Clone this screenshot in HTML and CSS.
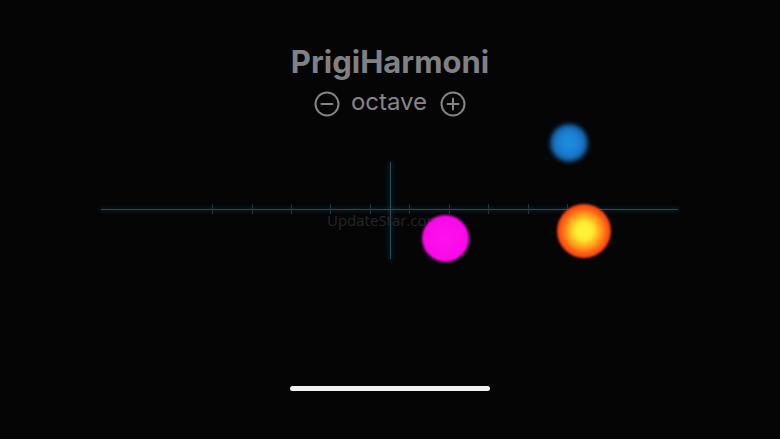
FILE: index.html
```html
<!DOCTYPE html>
<html>
<head>
<meta charset="utf-8">
<link rel="stylesheet" href="styles.css">
</head>
<body>
<div class="screen">
  <header class="header">
    <h1 class="title">PrigiHarmoni</h1>
    <div class="octave">
      <svg class="icon" viewBox="0 0 26 26" width="26" height="26"><circle cx="13" cy="13" r="11.5" fill="none" stroke="currentColor" stroke-width="2"/><line x1="7.5" y1="13" x2="18.5" y2="13" stroke="currentColor" stroke-width="2" stroke-linecap="round"/></svg>
      <span class="octave-label">octave</span>
      <svg class="icon" viewBox="0 0 26 26" width="26" height="26"><circle cx="13" cy="13" r="11.5" fill="none" stroke="currentColor" stroke-width="2"/><line x1="7.5" y1="13" x2="18.5" y2="13" stroke="currentColor" stroke-width="2" stroke-linecap="round"/><line x1="13" y1="7.5" x2="13" y2="18.5" stroke="currentColor" stroke-width="2" stroke-linecap="round"/></svg>
    </div>
  </header>

  <div class="stage">
    <div class="axis"></div>
    <div class="tick" style="left:212px"></div>
    <div class="tick" style="left:252px"></div>
    <div class="tick" style="left:291px"></div>
    <div class="tick" style="left:330px"></div>
    <div class="tick" style="left:370px"></div>
    <div class="tick" style="left:409px"></div>
    <div class="tick" style="left:449px"></div>
    <div class="tick" style="left:488px"></div>
    <div class="tick" style="left:528px"></div>
    <div class="tick" style="left:567px"></div>
    <div class="cursor"></div>
    <div class="watermark">UpdateStar.com</div>
    <div class="dot dot-blue"></div>
    <div class="dot dot-magenta"></div>
    <div class="dot dot-orange"></div>
  </div>

  <div class="home-bar"></div>
</div>
</body>
</html>
```

FILE: styles.css
```css
* { box-sizing: border-box; }
html, body {
  margin: 0;
  padding: 0;
  background: #050506;
}
.screen {
  position: relative;
  width: 780px;
  height: 439px;
  overflow: hidden;
  background: #050506;
  display: flex;
  flex-direction: column;
  align-items: center;
  font-family: Inter, "Open Sans", sans-serif;
}
.header {
  display: flex;
  flex-direction: column;
  align-items: center;
  padding-top: 44px;
  color: #7d7d7f;
  position: relative;
  z-index: 2;
}
.title {
  margin: 0;
  font-size: 31px;
  font-weight: 700;
  line-height: 36px;
  letter-spacing: 0;
  color: #818183;
}
.octave {
  display: flex;
  align-items: center;
  gap: 11px;
  margin-top: 8px;
  color: #858587;
}
.octave-label {
  font-size: 24px;
  line-height: 28px;
  color: #868688;
  padding-bottom: 3px;
  margin-right: 2px;
}
.icon { display: block; }

.stage {
  position: absolute;
  left: 0;
  top: 0;
  width: 780px;
  height: 439px;
}
.axis {
  position: absolute;
  left: 101px;
  top: 208.5px;
  width: 577px;
  height: 1px;
  background: #2a4a58;
  box-shadow: 0 0 4px 1px rgba(40, 110, 140, 0.3);
}
.tick {
  position: absolute;
  top: 204px;
  width: 1px;
  height: 10px;
  background: #26363e;
}
.cursor {
  position: absolute;
  left: 389.5px;
  top: 162px;
  width: 1px;
  height: 97px;
  background: #2a4c5b;
  box-shadow: 0 0 5px 1px rgba(40, 110, 140, 0.3);
}
.watermark {
  position: absolute;
  left: 327px;
  top: 210px;
  font-family: "Open Sans", sans-serif;
  font-size: 15px;
  color: #262628;
}
.dot {
  position: absolute;
  border-radius: 50%;
}
.dot-blue {
  left: 550px;
  top: 124px;
  width: 38px;
  height: 38px;
  background: radial-gradient(circle, #1f8ee0 0%, #1a80d4 40%, #1466b0 62%, rgba(15, 60, 110, 0) 100%);
  filter: blur(2px);
}
.dot-magenta {
  left: 422px;
  top: 215px;
  width: 47px;
  height: 47px;
  background: radial-gradient(circle, #ff10f0 0%, #fa0ae8 62%, #d806c8 82%, rgba(180, 0, 170, 0) 100%);
  filter: blur(1px);
}
.dot-orange {
  left: 557px;
  top: 204px;
  width: 54px;
  height: 54px;
  background: radial-gradient(circle, #fff53a 0%, #ffee30 22%, #ffa51c 42%, #ff5a14 60%, #f22a0c 78%, rgba(200, 20, 0, 0) 100%);
  filter: blur(1px);
}

.home-bar {
  position: absolute;
  left: 290px;
  top: 386px;
  width: 200px;
  height: 5px;
  border-radius: 3px;
  background: #f2f2f2;
}
```
